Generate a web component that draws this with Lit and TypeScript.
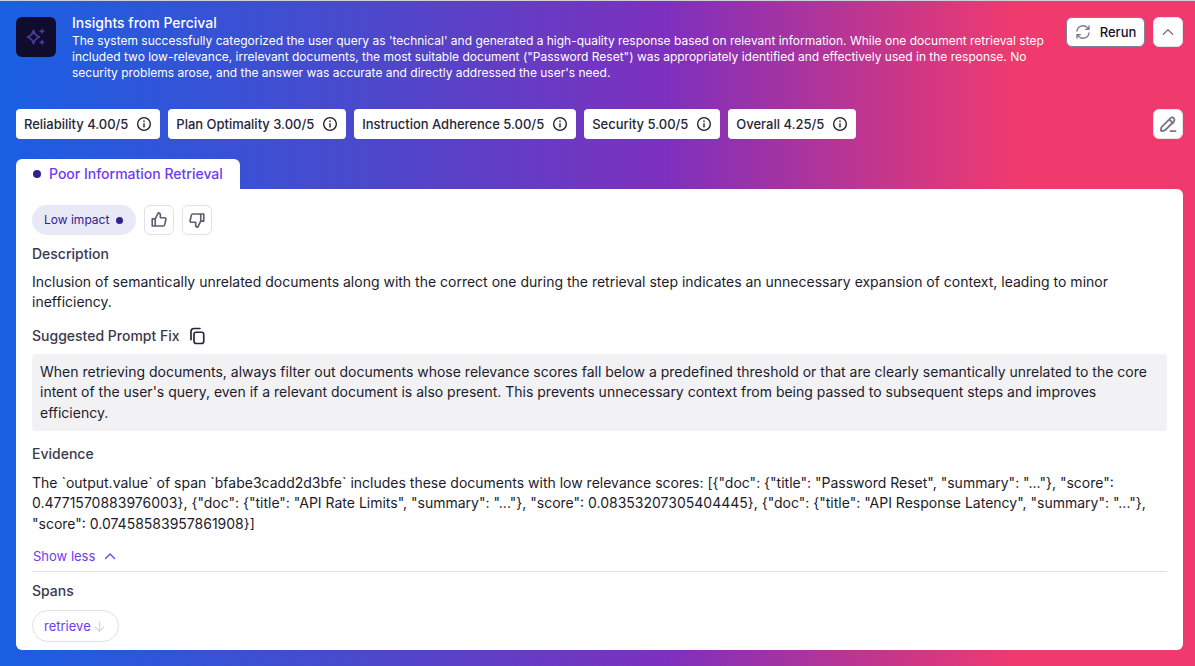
import { LitElement, html, css } from "lit";
import { customElement } from "lit/decorators.js";

const info = html`<svg class="info" viewBox="0 0 24 24" width="16" height="16" fill="none" stroke="#1c1b2b" stroke-width="2" stroke-linecap="round"><circle cx="12" cy="12" r="9.500"/><path d="M12 11.500v5M12 7.500v.6"/></svg>`;

@customElement("app-root")
export class AppRoot extends LitElement {
  static styles = css`
    :host { display: block; font-family: Inter, "Liberation Sans", sans-serif; color: #1c1b2b; }
    * { box-sizing: border-box; }
    .page { width: 1195px; height: 666px; overflow: hidden; border-top: 1px solid #cfd0d8; padding: 16px 12px 16px 16px;
      background: linear-gradient(90deg, #1a5fe3 0%, #4a49cc 30%, #7e30bd 56%, #f03a6e 85%, #f03a6e 100%); display: flex; flex-direction: column; }
    .top { display: flex; align-items: flex-start; height: 92px; }
    .logo { width: 40px; height: 40px; border-radius: 6px; background: #100c2e; display: flex; align-items: center; justify-content: center; flex: none; margin-right: 16px; }
    .text { width: 978px; color: #fff; margin-top: -2px; }
    .title { font-size: 14px; line-height: 16px; font-weight: 500; margin-bottom: 2px; }
    .body { font-size: 12px; line-height: 16px; font-weight: 400; }
    .actions { margin-left: auto; display: flex; gap: 8px; }
    .btn { height: 30px; background: #fff; border-radius: 6px; display: flex; align-items: center; justify-content: center; }
    .rerun { width: 79px; border: 1px solid #83829a; font-size: 13px; font-weight: 500; gap: 9px; color: #14122b; }
    .square { width: 30px; border: 1px solid #e4e4ea; }
    .chips { display: flex; gap: 8px; height: 30px; align-items: center; }
    .chip { height: 30px; background: #fff; border-radius: 4px; padding: 0 8px; display: flex; align-items: center; gap: 8px; font-size: 13px; font-weight: 500; letter-spacing: -0.015px; color: #26253a; white-space: nowrap; }
    .info { flex: none; }
    .chips .square { margin-left: auto; }
    .tab { margin-top: 20px; width: 224px; height: 30px; background: #fff; border-radius: 6px 6px 0 0; display: flex; align-items: center; padding-left: 17px; gap: 8px; font-size: 14px; font-weight: 500; color: #6d3bf5; line-height: 28px; }
    .dot { width: 7px; height: 7px; border-radius: 50%; background: #32208f; flex: none; }
    .tab .dot { width: 8px; height: 8px; }
    .card { width: 1167px; height: 461px; background: #fff; border-radius: 0 6px 6px 6px; padding: 16px; display: flex; flex-direction: column; font-size: 14px; line-height: 20.5px; }
    .card > * { flex: none; }
    .row { display: flex; align-items: center; gap: 8px; height: 30px; }
    .impact { height: 30px; width: 104px; border-radius: 15px; background: #e8e9f6; color: #32208f; font-size: 12px; display: flex; align-items: center; padding-left: 12px; gap: 7px; }
    .thumb { width: 30px; height: 30px; border-radius: 6px; border: 1px solid #e1e1e6; display: flex; align-items: center; justify-content: center; }
    .head { font-weight: 500; color: #3a394d; }
    .desc { color: #1c1b2b; }
    .fix { display: flex; align-items: center; gap: 8px; margin-top: 13px; }
    .box { background: #f2f2f5; border-radius: 4px; padding: 8px; margin-top: 7.5px; height: 77px; }
    .h-desc { margin-top: 9px; }
    .t-desc { margin-top: 7px; }
    .h-evid { margin-top: 13.5px; }
    .t-evid { margin-top: 8px; }
    .more { display: flex; align-items: center; gap: 9px; color: #6d3bf5; font-size: 13px; padding-left: 1px; height: 20px; margin-top: 12px; }
    hr { border: 0; border-top: 1px solid #dfdfe4; margin: 5px 0 0; width: 100%; }
    .h-span { margin-top: 9px; }
    .pill { margin-top: 8.5px; width: 87px; height: 32px; border-radius: 16px; border: 1px solid #e1e1e8; display: flex; align-items: center; padding-left: 11px; gap: 2px; font-size: 13px; color: #6d3bf5; }
  `;

  render() {
    return html`<div class="page">
      <div class="top">
        <div class="logo"><svg width="24" height="24" viewBox="0 0 24 24" fill="#4b3a9c"><path fill="none" stroke="#4b3a9c" stroke-width="1.800" stroke-linejoin="round" d="M9.500 5.500c.8 3.400 2.600 5.400 6 6.500-3.400 1.100-5.200 3.100-6 6.500-.8-3.400-2.600-5.400-6-6.500 3.400-1.100 5.200-3.100 6-6.500z"/><path d="M18 3l1 2.200 2.200 1-2.200 1-1 2.200-1-2.200-2.200-1 2.200-1zM18 14l1 2.200 2.200 1-2.200 1-1 2.200-1-2.200-2.200-1 2.200-1z"/></svg></div>
        <div class="text">
          <div class="title">Insights from Percival</div>
          <div class="body">The system successfully categorized the user query as 'technical' and generated a high-quality response based on relevant information. While one document retrieval step included two low-relevance, irrelevant documents, the most suitable document ("Password Reset") was appropriately identified and effectively used in the response. No security problems arose, and the answer was accurate and directly addressed the user's need.</div>
        </div>
        <div class="actions">
          <div class="btn rerun"><svg width="16" height="16" viewBox="0 0 24 24" fill="none" stroke="#77768c" stroke-width="2" stroke-linecap="round" stroke-linejoin="round"><path d="M3 10.500A9 9 0 0 1 18.500 5.500L21 8M21 3v5h-5M21 13.500A9 9 0 0 1 5.500 18.500L3 16M3 21v-5h5"/></svg>Rerun</div>
          <div class="btn square"><svg width="16" height="16" viewBox="0 0 24 24" fill="none" stroke="#77768c" stroke-width="2" stroke-linecap="round" stroke-linejoin="round"><path d="M5 15.500l7-7 7 7"/></svg></div>
        </div>
      </div>
      <div class="chips">
        <div class="chip">Reliability 4.00/5 ${info}</div>
        <div class="chip">Plan Optimality 3.00/5 ${info}</div>
        <div class="chip">Instruction Adherence 5.00/5 ${info}</div>
        <div class="chip">Security 5.00/5 ${info}</div>
        <div class="chip">Overall 4.25/5 ${info}</div>
        <div class="btn square"><svg width="20" height="20" viewBox="0 0 24 24" fill="none" stroke="#77768c" stroke-width="2.200" stroke-linecap="round" stroke-linejoin="round"><path d="M5 20.500l-1.500-.5.5-4L15 5c1.300-1.300 3-1.300 4 0s1 2.700 0 4L8.500 19.500z M13.500 6.500l4.500 4.500M15 20.500h6"/></svg></div>
      </div>
      <div class="tab"><span class="dot"></span>Poor Information Retrieval</div>
      <div class="card">
        <div class="row">
          <div class="impact">Low impact <span class="dot"></span></div>
          <div class="thumb"><svg width="18" height="18" viewBox="0 0 24 24" fill="none" stroke="#5e5c72" stroke-width="2.200" stroke-linejoin="round"><path d="M7 10.500v9.500H3v-9.500zM7 10.500l4-8c1.700 0 2.800 1.200 2.800 2.800V9h5.500c1.300 0 2.200 1.200 1.900 2.400l-1.600 6.800c-.2 1-1.100 1.800-2.100 1.800H7"/></svg></div>
          <div class="thumb"><svg width="18" height="18" viewBox="0 0 24 24" fill="none" stroke="#5e5c72" stroke-width="2.200" stroke-linejoin="round"><path d="M17 13.500V4h4v9.500zM17 13.500l-4 8c-1.700 0-2.800-1.200-2.800-2.800V15H4.700c-1.300 0-2.200-1.200-1.900-2.400l1.600-6.800C4.600 4.800 5.500 4 6.500 4H17"/></svg></div>
        </div>
        <div class="head h-desc">Description</div>
        <div class="desc t-desc">Inclusion of semantically unrelated documents along with the correct one during the retrieval step indicates an unnecessary expansion of context, leading to minor inefficiency.</div>
        <div class="head fix">Suggested Prompt Fix <svg width="18" height="18" viewBox="0 0 24 24" fill="none" stroke="#26253a" stroke-width="2.200" stroke-linejoin="round" stroke-linecap="round"><rect x="8" y="7" width="13" height="15" rx="3"/><path d="M4 17V6c0-2 1.500-4 4-4h8"/></svg></div>
        <div class="box">When retrieving documents, always filter out documents whose relevance scores fall below a predefined threshold or that are clearly semantically unrelated to the core intent of the user's query, even if a relevant document is also present. This prevents unnecessary context from being passed to subsequent steps and improves efficiency.</div>
        <div class="head h-evid">Evidence</div>
        <div class="desc t-evid">The \`output.value\` of span \`bfabe3cadd2d3bfe\` includes these documents with low relevance scores: [{"doc": {"title": "Password Reset", "summary": "..."}, "score": 0.4771570883976003}, {"doc": {"title": "API Rate Limits", "summary": "..."}, "score": 0.08353207305404445}, {"doc": {"title": "API Response Latency", "summary": "..."}, "score": 0.07458583957861908}]</div>
        <div class="more">Show less <svg width="12" height="12" viewBox="0 0 24 24" fill="none" stroke="#6d3bf5" stroke-width="2.600" stroke-linecap="round" stroke-linejoin="round"><path d="M3 17l9-9 9 9"/></svg></div>
        <hr />
        <div class="head h-span">Spans</div>
        <div class="pill">retrieve <svg width="13" height="13" viewBox="0 0 24 24" fill="none" stroke="#d8d8de" stroke-width="2.500" stroke-linecap="round" stroke-linejoin="round"><path d="M12 3v18M4 13l8 8 8-8"/></svg></div>
      </div>
    </div>`;
  }
}
